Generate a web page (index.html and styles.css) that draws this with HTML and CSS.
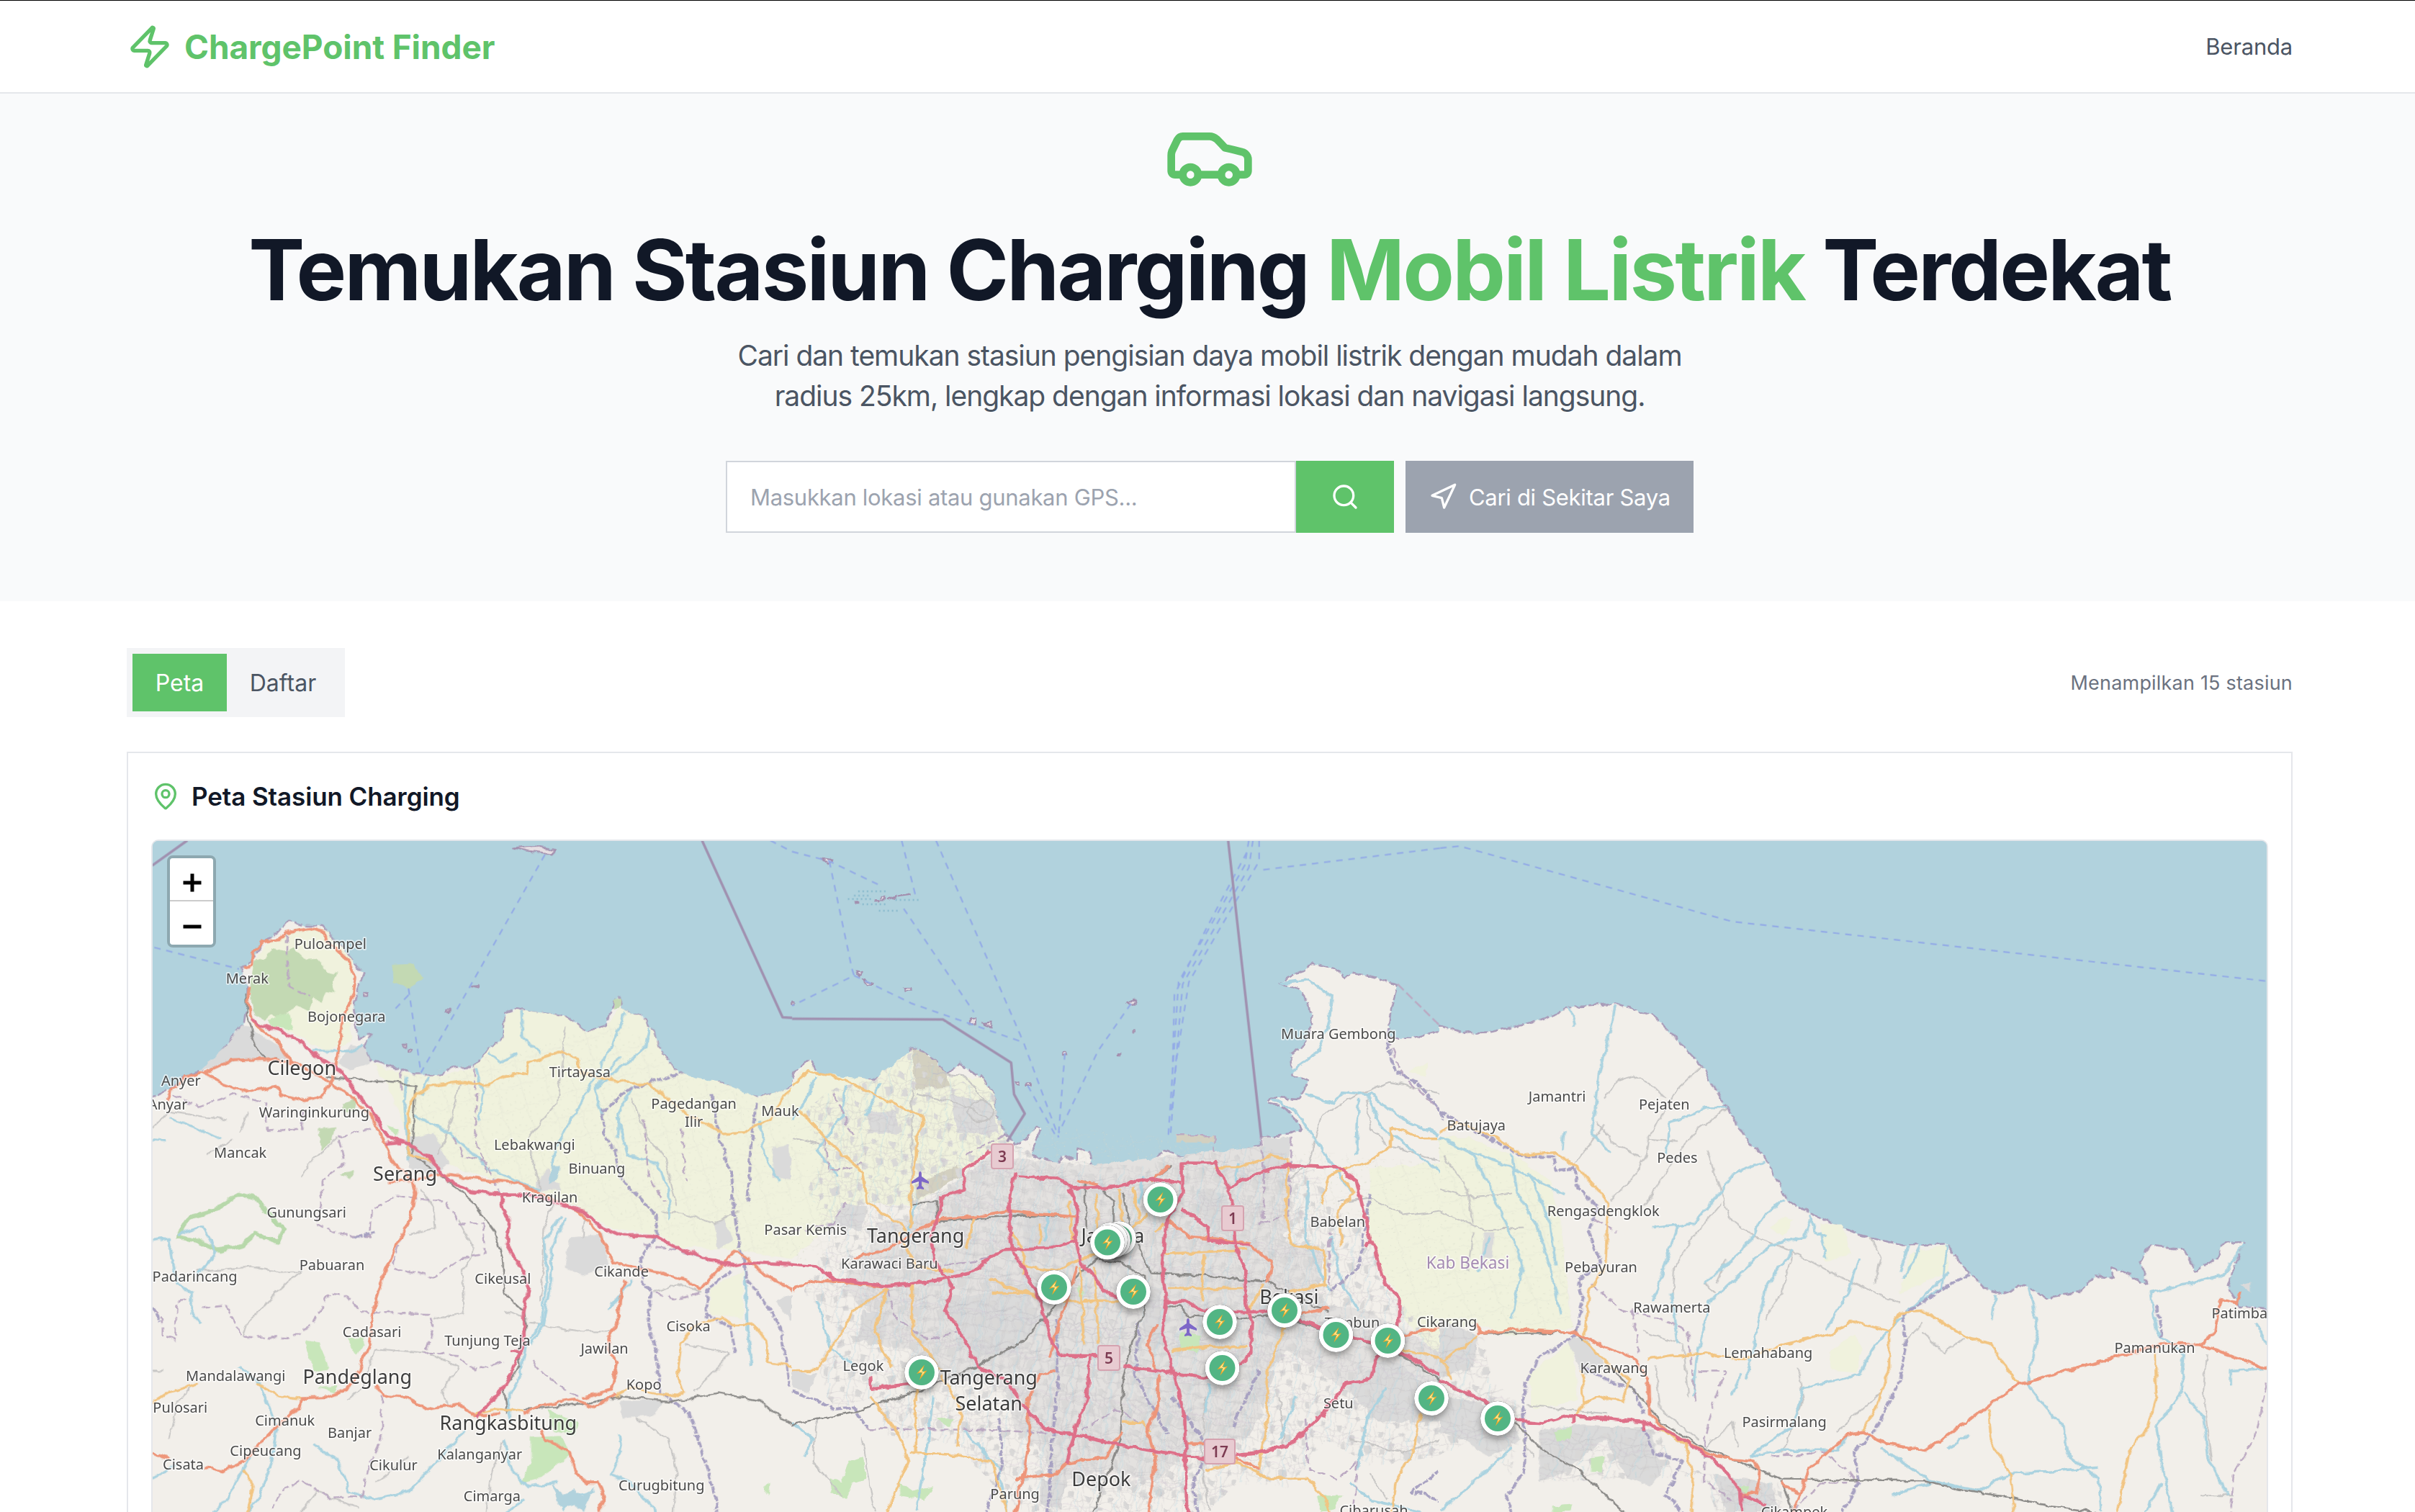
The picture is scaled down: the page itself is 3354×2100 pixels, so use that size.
FILE: index.html
```html
<!DOCTYPE html>
<html lang="id">
<head>
<meta charset="utf-8">
<title>ChargePoint Finder</title>
<link rel="stylesheet" href="styles.css">
</head>
<body>
<header class="topbar">
  <a class="brand">
    <svg class="icon brand-icon" viewBox="0 0 24 24"><path d="M4 14a1 1 0 0 1-.78-1.63l9.9-10.2a.5.5 0 0 1 .86.46l-1.92 6.02A1 1 0 0 0 13 10h7a1 1 0 0 1 .78 1.63l-9.9 10.2a.5.5 0 0 1-.86-.46l1.92-6.02A1 1 0 0 0 11 14z"/></svg>
    <span class="brand-name">ChargePoint Finder</span>
  </a>
  <nav class="nav">Beranda</nav>
</header>

<section class="hero">
  <svg class="icon hero-icon" viewBox="0 0 24 24"><path d="M19 17h2c.6 0 1-.4 1-1v-3c0-.9-.7-1.7-1.5-1.9C18.7 10.6 16 10 16 10s-1.3-1.4-2.2-2.3c-.5-.4-1.1-.7-1.8-.7H5c-.6 0-1.1.4-1.4.9l-1.4 2.9A3.7 3.7 0 0 0 2 12v4c0 .6.4 1 1 1h2"/><circle cx="7" cy="17" r="2"/><path d="M9 17h6"/><circle cx="17" cy="17" r="2"/></svg>
  <h1 class="hero-title">Temukan Stasiun Charging <span class="accent">Mobil Listrik</span> Terdekat</h1>
  <p class="hero-text">Cari dan temukan stasiun pengisian daya mobil listrik dengan mudah dalam<br>radius 25km, lengkap dengan informasi lokasi dan navigasi langsung.</p>
  <div class="search">
    <div class="search-field"><span class="search-placeholder">Masukkan lokasi atau gunakan GPS...</span></div>
    <div class="search-button"><svg class="icon icon-md" viewBox="0 0 24 24"><circle cx="11" cy="11" r="8"/><path d="m21 21-4.3-4.3"/></svg></div>
    <div class="nearby-button"><svg class="icon icon-md" viewBox="0 0 24 24"><path d="m3 11 19-9-9 19-2-8-8-2z"/></svg><span class="nearby-label">Cari di Sekitar Saya</span></div>
  </div>
</section>

<main class="main">
  <div class="toolbar">
    <div class="tabs"><span class="tab tab-active">Peta</span><span class="tab">Daftar</span></div>
    <span class="count">Menampilkan 15 stasiun</span>
  </div>
  <section class="card">
    <h2 class="card-title"><svg class="icon icon-md accent" viewBox="0 0 24 24"><path d="M20 10c0 4.993-5.539 10.193-7.399 11.799a1 1 0 0 1-1.202 0C9.539 20.193 4 14.993 4 10a8 8 0 0 1 16 0"/><circle cx="12" cy="10" r="3"/></svg><span class="card-name">Peta Stasiun Charging</span></h2>
    <div class="map">
      <svg class="layer" viewBox="99.11 546.04 1372.58 435.71" preserveAspectRatio="none">
        <defs>
          <filter id="rough" x="0" y="0" width="1" height="1" color-interpolation-filters="sRGB">
            <feTurbulence type="fractalNoise" baseFrequency="0.14" numOctaves="3" seed="4" result="n"/>
            <feDisplacementMap in="SourceGraphic" in2="n" scale="4" xChannelSelector="R" yChannelSelector="G"/>
          </filter>
          <clipPath id="centre"><rect x="-2" y="0" width="1580" height="1600"/></clipPath>
          <clipPath id="east"><rect x="-1" y="0" width="1520" height="1600"/></clipPath>
          <pattern id="streets" width="97" height="83" patternUnits="userSpaceOnUse" patternTransform="rotate(8)">
            <path d="M2 3l12 1-2 9-9 2zM40 6l15 3-4 14-8-4zM75 28l13 2-3 16-9-5zM12 48l18-3 5 14-15 7zM54 50l10-5 4 18-12 3zM80 68l12-5 3 12-11 3z" fill="#d9d8d7"/>
            <path d="M0 14l24 3 9 17 25-4 39-16M0 45l22-7 18 11 25-4 32 0M9 0l6 22-9 26 12 35M34 0l4 34-7 19 10 30M62 0l-5 27 12 23-7 33M84 0l-6 31 9 24-3 28M0 70l37-5 24 6 36-1M15 22l23-4 24 9 22-7M22 38l8 26M50 33l-3 33M70 49l27-13M47 8l15 4M78 14l-10 22" fill="none" stroke="#bcbabf" stroke-width=".6"/>
            <path d="M26 0l-7 22 9 22-4 39M72 0l3 39-9 44" fill="none" stroke="#abd3e0" stroke-width=".8"/>
            <path d="M0 30l18 5 14-4 20 14 16-9 29-6" fill="none" stroke="#c3b3cb" stroke-width=".5"/>
          </pattern>
          <pattern id="villages" width="61" height="53" patternUnits="userSpaceOnUse" patternTransform="rotate(-17)">
            <path d="M5 6h2v1H4zM17 12l2 1-2 1zM31 5h1v2h-2zM42 17l2-1v2zM53 8h1v2h-2zM10 28h2v1h-2zM26 33l2-2 1 2zM38 38h1v2h-2zM52 31h1v2h-2zM16 45h2v1h-2zM31 48h3v1h-3zM48 46l2-1v2zM23 22h2v1h-2z" fill="#d6dac9"/>
            <path d="M0 19l22 5 12-4 27 7M30 0l4 20-5 33" fill="none" stroke="#d3d6cb" stroke-width=".4"/>
          </pattern>
        </defs>
        <rect class="sea" x="90" y="540" width="1400" height="450"/>
        <g filter="url(#rough)">
          <!-- west: Banten -->
          <g transform="translate(93.5 542.3) scale(.26836 .28027)">
            <path class="land" d="M10 1580V612L60 590 95 560 140 545 175 515 205 480 240 440 250 400 250 350 235 305 262 290 290 245 325 225 350 198 385 208 430 210 470 250 505 290 532 320 515 360 505 400 512 440 520 470 552 462 532 490 545 520 600 535 650 555 720 555 740 540 800 535 830 500 868 470 872 412 905 400 940 410 1020 418 1070 455 1120 440 1135 385 1150 375 1155 405 1200 420 1235 450 1245 490 1290 550 1350 575 1400 572 1440 600 1490 608 1540 595 1575 572V1580Z"/>
            <path class="farm" d="M555 530L650 557 720 557 800 538 830 502 868 472 874 414 905 403 1020 420 1070 457 1122 442 1150 400 1200 422 1235 452 1245 492 1290 552 1400 574 1490 610 1575 580V985L1430 960 1300 955 1240 925 1130 910 1050 860 940 815 760 775 640 700 600 600Z"/>
            <path class="farm" d="M270 400L300 430 440 500 500 480 505 290 440 220 380 212 300 250 260 300ZM1370 1050L1450 1010 1450 1120 1370 1110Z"/>
            <path class="farmdots" d="M650 557L900 500 1150 430 1290 552 1490 610 1575 600V985L1430 960 1240 925 1050 860 760 775 640 700Z"/>
            <path class="wood" d="M262 405L255 350 268 290 290 285 310 265 345 272 360 262 390 290 420 288 445 315 470 320 455 340 465 365 440 362 430 385 410 380 400 408 370 395 350 405 330 425 310 415 290 432Z"/>
            <path class="wood" d="M600 300L650 298 675 330 640 355 602 340ZM420 680L462 675 455 708 430 728ZM475 785L510 775 500 795ZM480 620L515 610 510 640 480 640ZM1135 382L1152 376 1150 400 1135 402Z"/>
            <path class="grass" d="M388 1170L425 1175 448 1235 412 1242ZM490 1165L535 1165 515 1205ZM935 1395L1010 1392 1030 1435 960 1490 912 1502 935 1450ZM975 1330L1050 1360 1040 1390 990 1380ZM420 1280L470 1275 460 1292ZM1500 1510L1515 1500 1512 1530ZM300 430L350 410 360 450 310 445ZM590 670L620 680 610 700Z"/>
            <path class="town" d="M135 545L205 482 240 440 330 490 345 520 220 525ZM470 530L500 485 530 490 548 525 500 545ZM640 700L700 690 740 760 700 790 640 770ZM950 800L975 775 1010 820 950 825ZM1030 930L1110 925 1125 1000 1060 1020 1018 1000ZM1380 900L1405 890 1422 940 1390 960ZM1525 720L1560 715 1568 800 1520 790ZM1150 1310L1260 1310 1230 1345 1160 1350ZM1530 1080L1575 1060V1140Z"/>
            <path class="islet" d="M892 31L950 24 995 34 985 44 930 38ZM790 352L808 350 806 356ZM732 405h8v4h-8zM530 365h12v6h-12zM625 485h10v5h-10zM638 495h10v5h-10z"/>
            <path class="park" d="M80 930L110 885 170 870 230 830 270 840 300 880 338 912 325 942 270 925 240 950 180 962 130 940Z"/>
            <path class="minor" d="M20 680L60 640 200 660M240 1160L250 1130 320 1060 380 1010M130 1010L260 1000 330 1012 380 1010M670 820L700 860 705 910 640 925M765 575L730 700 710 740M760 890L800 960 770 1010 775 1110M930 1130L1060 1150 1130 1150M870 1100L925 1120M690 1205L760 1230 720 1290 735 1320M540 1250L560 1190 700 1200M490 1310L540 1270M60 1400L80 1320 110 1280M640 1440L560 1500M830 1568L840 1480 870 1400M1190 1350L1270 1400 1290 1480 1280 1568M990 850L970 900 960 1080M380 1568L420 1520 520 1560M700 1120L775 1110M1230 1060L1290 1040 1350 1060M1310 1180L1420 1200M470 700L400 760 380 790M20 1240L50 1240M150 740L215 705M230 690L250 640M1060 930L1070 870M1250 870L1320 880 1380 900 1440 870M1180 610L1220 700 1260 750 1290 860M1330 1290L1400 1220 1420 1200M960 825L930 700 1000 620 1020 440"/>
            <path class="river" d="M60 655L120 675 185 705M20 940L60 935 80 1040 115 1060 115 1110 140 1130M80 925L140 905 175 965 130 1020M915 405L918 470 960 505M835 505L860 525 905 505M1165 410L1130 490 1075 590 1020 680 990 740 985 800M1225 445L1215 490 1150 540 1090 590 1110 650M1150 512L1090 590M805 540L820 590 810 660M655 650L740 690 830 770 960 825M1010 880L970 940 975 1030 960 1130 925 1180 910 1250 880 1310 890 1360M1020 885L985 960 985 1030 965 1135 935 1180M230 1230L280 1270 320 1370 310 1450 280 1530 250 1568M410 1412L470 1450 495 1520 560 1540 640 1520 720 1440 775 1380M870 1400L890 1470 930 1510 1000 1500M1150 1390L1155 1430 1130 1480 1180 1500 1240 1568M1145 650L1170 740 1240 760 1270 820 1270 890M1490 660L1500 740 1535 800M1455 1010L1460 1150 1470 1230M20 1490L80 1460M255 1440L200 1540 170 1568M635 560L630 620 640 750M410 500L500 500 530 485M1180 585L1150 640 1145 700M20 705L50 708M1120 1100L1180 1030M690 560L670 600M1010 1568L1040 1530 1090 1520M880 1568L920 1540"/>
            <path class="lake" d="M985 765L1005 765 1000 800 980 805ZM985 1500L1010 1525 1040 1515 1060 1530 1090 1510 1060 1568 1040 1550 1010 1560Z"/>
            <path class="border" d="M20 1095L45 1120 45 1160 75 1170 80 1080 110 1075M140 1095L200 1090 235 1160 350 1165 400 1140 450 1060 490 1065 525 1105 690 1108 700 1140 680 1200 760 1205 800 1240 870 1220M800 540L805 600 800 700 830 780M70 600L130 630 220 600 290 620 300 685 380 680 385 640M550 680L470 700 485 760 430 800 430 860 415 900 480 925 545 930 550 870 610 835 730 850 760 900 820 900 825 970 770 980 700 1025 600 1000 620 940M575 1300L575 1400 540 1470 530 1530 450 1535 380 1495 330 1520 310 1560M940 1220L980 1260 1050 1300M750 700L770 740 830 760 860 830M345 230L345 300 350 350 400 375M620 545L625 600M1210 950L1290 960 1380 990M1210 660L1220 790 1260 850M1300 680L1310 800M1240 1060L1290 1075 1350 1060"/>
            <path class="limit" d="M1290 555L1230 570 1170 590 1110 640 1112 690 1140 730 1150 790 1200 840 1240 880 1240 930 1200 980 1205 1030 1225 1060 1220 1130 1240 1200 1250 1290 1320 1340 1340 1400 1370 1490 1390 1568M1375 600L1390 700 1420 780 1425 860 1440 940 1460 1030 1500 1080 1540 1140 1560 1280M1480 620L1470 720 1460 850M1360 1120L1365 1050 1420 1010M1360 1110L1420 1140 1430 1200M20 1095L40 1130M510 930L560 920"/>
            <path class="rail" d="M245 370L250 420 270 490 295 518M155 545L210 522 320 518M440 560L658 578 648 740 720 790 800 855 850 920 868 985 872 1060 920 1105 925 1140 905 1190 910 1230 870 1280 880 1340M920 1330L1060 1318 1155 1300 1275 1312 1390 1292 1490 1310 1540 1350 1568 1362"/>
            <path class="primary" d="M658 600L690 582 770 572 830 580 870 560 925 550 930 525 1005 502 1048 515 1052 550 1130 565 1180 575 1220 575 1260 605 1320 650 1400 692 1450 690 1520 655 1550 600 1570 585M658 600L640 640 640 740 700 755M20 1315L60 1290 130 1270M270 1268L330 1300 380 1305M240 1470L265 1510 250 1568M1140 1300L1180 1280 1220 1290 1290 1300 1305 1290 1290 1250 1300 1180 1330 1135 1400 1118 1425 1135 1475 1135 1505 1170 1510 1220 1568 1230M800 1340L850 1330 920 1335"/>
            <path class="trunk" d="M240 305L262 300 265 270 290 245 330 240 345 225 400 215 435 225 450 250 495 290 510 330 505 370 480 430 470 500 460 560 430 605 390 615 330 600 320 580 250 595 190 575 145 550 100 560 65 590 55 612M255 350L250 390 270 440 320 475 350 520 420 555 500 605 550 650 575 700 605 760 650 800 658 830 645 890 610 950 580 1020 555 1100 545 1180 520 1240 490 1285 440 1303 380 1305 375 1325 320 1370 240 1450 190 1472 145 1465M145 550L210 522 310 518 360 530M590 802L650 800 720 785 800 795 900 805 960 830 1050 870 1100 920 1135 990 1180 1000 1250 1015 1310 1030 1345 1052 1380 1015 1430 960 1470 990 1520 1030 1568 1052M1165 1030L1150 1075 1145 1130 1125 1165 1120 1190 1145 1220 1130 1285 1060 1305M560 1275L580 1298 630 1300 685 1330 760 1318 800 1345 860 1340M920 1340L960 1320 1040 1308 1090 1325 1140 1295M960 1375L970 1400 1030 1430 1045 1480 1070 1500 1100 1500 1115 1540 1100 1568M20 1432L60 1445"/>
            <path class="motorway" d="M262 425L280 440 325 452 370 475 430 520 475 545 510 595 550 635 590 700 640 715 690 745 735 800 790 825 870 832 930 832 990 850 1060 870 1120 915 1160 927 1230 928 1300 960 1370 985 1430 997 1470 990 1570 994M868 832L866 860 882 895 878 950 915 1010 930 1050 918 1110 920 1180 900 1220 875 1275 840 1310 805 1350M885 1193L910 1195M585 716L620 712"/>
          </g>
          <!-- centre: Jakarta -->
          <g transform="translate(514.25 542.3) scale(.26836 .28027)"><g clip-path="url(#centre)">
            <path class="land" d="M-8 1580V580L10 545 40 522 65 550 120 570 200 565 260 535 290 490 330 510 375 555 405 530 455 560 490 600 490 650 520 690 540 718 570 700 590 675 602 680 580 740 640 762 655 740 690 755 690 725 718 730 730 780 790 790 840 785 880 755 900 730 930 740 1020 750 1060 735 1130 720 1140 700 1210 690 1235 680 1215 655 1190 630 1150 620 1160 608 1225 612 1250 570 1210 555 1205 510 1235 490 1260 440 1250 390 1225 355 1180 342 1230 315 1260 298 1310 310 1340 330 1360 318 1465 345 1450 400 1440 470 1500 470 1576 450V1580Z"/>
            <path class="farm" d="M-8 583L40 525 65 552 200 567 290 495 375 558 455 562 490 600 490 650 530 715 480 735 290 860 170 850 -8 985ZM1400 770L1576 760V1230L1480 1120 1470 1060 1435 1030 1390 900ZM1490 545L1540 525 1530 560Z"/>
            <path class="farmdots" d="M-8 620L1576 760V1230L1480 1120 1390 900 -8 985Z"/>
            <path class="sand" d="M290 490L330 512 375 555 385 580 300 590ZM300 810L400 765 410 790 300 845ZM928 696L1022 696V712H928Z"/>
            <path class="city" d="M300 880L480 740 700 765 900 745 1140 720 1200 760 1210 860 1190 940 1290 960 1270 1060 1300 1090 1390 1100 1480 1150 1576 1200V1360L1440 1340 1330 1280 1200 1190 1120 1270 1140 1340 1100 1400 960 1420 880 1500 760 1470 640 1500 600 1420 540 1380 520 1290 480 1270 330 1260 300 1200 220 1180 200 1110 130 1060 130 1000 190 960 200 900Z"/>
            <path class="town" d="M180 640L250 640 260 690 190 690ZM380 600L480 620 500 690 400 690ZM370 1080L560 1040 600 1120 540 1200 430 1210ZM560 880L660 880 670 950 560 960ZM1140 700L1210 700 1200 760 1140 770ZM1130 1080L1200 1100 1190 1170 1120 1150ZM850 1040L890 1050 890 1200 850 1150ZM980 820L1050 830 1055 930 1000 900ZM1340 1280L1440 1210 1568 1290 1568 1360 1420 1360ZM600 1490L660 1500 650 1560 600 1550ZM1100 1240L1170 1240 1140 1330ZM0 1240L60 1250 40 1290 0 1280ZM170 1100L230 1110 220 1180 160 1170ZM120 850L180 860 170 920 100 900Z"/>
            <path class="streets" d="M30 640L90 590 200 567 290 495 375 558 490 600 530 715 640 765 730 785 840 787 900 745 1140 720 1260 760 1300 860 1390 900 1420 1010 1470 1080 1568 1180V1440L1400 1460 1290 1400 1200 1510 1080 1500 1000 1568H560L480 1500 400 1410 230 1390 200 1300 100 1330 60 1230 110 1150 30 1060 90 940 40 820 80 740Z"/>
            <path class="streets streets-turned" d="M290 860L480 740 900 760 1200 760 1290 960 1300 1180 1150 1250 1110 1420 860 1560 620 1500 480 1260 330 1260 150 1080Z"/>
            <path class="grass" d="M90 1490L120 1500 140 1450 170 1440 180 1490 150 1500 130 1540 95 1520ZM350 1350L390 1350 380 1370ZM260 1500L290 1520 340 1510 320 1540 260 1530ZM940 1150L990 1160 980 1200 940 1190ZM690 1040L710 1060 700 1080ZM1270 1530L1330 1530 1310 1560 1280 1568Z"/>
            <path class="islet" d="M70 52L98 58 90 66ZM200 150h10v4h-10zM215 143h8v8h-8zM230 150l20-8v4zM255 144l30-7v3zM155 154h4v3h-4zM155 316L172 318 165 328ZM172 335L195 342 182 346ZM272 352h16v6h-16zM430 425h14v14h-14zM462 435l22-2-2 10zM812 385l18-2-4 12zM655 500h10v8h-10zM570 576h8v6h-8zM825 453h7v5h-7zM787 507h6v4h-6zM540 572h8v6h-8zM0 385h6v8h-6z"/>
            <path class="lake" d="M1466 352L1568 442 1500 470 1442 468Z"/>
            <path class="minor" d="M300 600L400 620 480 660M290 590V850M340 550L420 560 470 620M425 640A30 24 0 1 0 485 640A30 24 0 1 0 425 640M0 700L80 720M1370 600L1280 650 1250 760 1200 800M1370 600L1450 570 1568 600M1390 610L1400 680 1440 720M1450 720L1568 755M1000 1300L990 1450 1010 1568M1180 1300L1190 1420M1350 1400L1480 1430 1568 1400M1400 1480L1440 1540M60 1350L50 1450 120 1530M170 1400L200 1568M1320 850L1400 840 1480 880 1568 870"/>
            <path class="river" d="M1180 342L1250 335 1305 375 1300 430 1275 500 1205 550M1240 600L1310 620 1330 595 1400 600 1480 660 1568 695M1160 610L1220 640 1290 740 1340 810 1360 830M1370 610L1365 740M1390 600L1430 680 1568 780M60 560L30 620 0 660M130 580L120 650 60 730 110 790M210 575L180 650M300 850L280 930M340 1300L330 1400 300 1568M620 870L610 940M850 790L840 850M1010 1270L1000 1340M1080 760L1070 810M1440 1280L1390 1350 1370 1470M1520 1568L1400 1540 1350 1500M1220 1300L1180 1400M420 1380L500 1470 520 1568M60 1080L90 1180 150 1230M1300 930L1330 1040 1370 1100M1250 800L1240 930 1300 1060M0 1360L50 1400 30 1440"/>
            <path class="border" d="M930 696H1020V735M1440 470L1480 560 1568 640M1210 700L1200 880 1130 900M420 740L520 690M180 1375L480 1378 620 1385M340 1000L480 980M1240 1350L1250 1470 1320 1490 1370 1450 1360 1568M1300 1040L1300 920M1135 700L1142 800 1140 900M230 1050L250 1120 330 1170 400 1150M0 920L100 900 130 850M700 1380L780 1330 860 1370M80 700L90 780 180 760M100 600L150 700"/>
            <path class="limit" d="M0 1290L60 1310 100 1330 150 1325 180 1375M640 1120L645 1250 630 1400 620 1568M840 1130L830 1250 910 1390M920 1300L1010 1420 970 1500 980 1568M1130 1240L1100 1300 1065 1370M500 1350L510 1450 470 1568M1440 480L1460 550 1510 570 1568 640M1568 1470L1500 1520 1568 1540M1400 830L1370 1000 1300 1060"/>
            <path class="rail" d="M0 1365L150 1335 300 1290 450 1230 560 1170 620 1110 680 1030 740 980M355 895L480 885 560 880 690 885M350 900L350 850 290 855M710 800L712 910M750 820L780 850 780 950M800 830L820 920 870 1015 1000 1020 1150 1035 1200 1060 1300 1105M740 985L800 990 850 1020 855 1100 820 1180 800 1260 795 1400 730 1568M905 1090L940 1090 960 1115 1090 1120 1160 1110 1300 1150 1440 1185 1570 1262M915 765L870 800"/>
            <path class="primary" d="M0 580L40 545 120 565 200 600 320 655 300 700 300 740 285 850 290 910M20 640L100 720 170 780 180 850 260 900 280 920M1020 770L1080 770 1160 742 1200 750 1195 880 1210 950 1290 960 1290 1040 1200 1060M1280 850L1300 790 1340 770 1390 760 1450 720 1450 675 1520 700 1568 700M1330 790L1360 830 1320 870 1330 950M735 830L740 920M790 820L800 900M825 815L840 890M700 1000L705 1180M730 1000L742 1180M660 1080L840 1080M900 970L1100 960M910 1050L1090 1050M290 1040L290 1150 330 1200 360 1240M230 1050L200 1150 240 1230M300 1430L300 1280M285 1430L390 1435 480 1450 520 1568M0 1240L60 1240 100 1180 150 1100 230 1050M230 1568L280 1450 260 1390 190 1300M360 1250L410 1330 400 1420M1130 1470L1150 1350 1150 1240 1200 1120M1070 1450L1150 1490 1250 1490 1290 1540 1300 1568M1520 1340L1500 1430 1460 1500 1450 1568M800 1360L850 1360 870 1380M920 1195L1000 1185 1100 1185M480 1030L620 1080 660 1080M560 1000L640 1010 700 980 800 960M600 900L600 950M1000 970L990 1080M530 920L560 960 560 1020M670 850L680 940M440 880L420 960M260 920L300 1000 390 1010M1100 1110L1140 1040M1470 1190L1510 1200 1568 1210M860 880L800 930M880 920L900 900M640 1080L560 1060 480 1060M1000 1470L1080 1450"/>
            <path class="trunk" d="M0 1052L60 1030 220 1045M350 890L430 885 520 870 570 875 690 885M150 980L230 960 300 920 350 890M1110 950L1160 990 1150 1040M1230 1110L1300 1095M570 1310L575 1400 560 1480 540 1568M540 1490L640 1480 660 1455 760 1440 800 1380M885 1250L885 1320 860 1380 880 1440 860 1568M1070 1440L1130 1470M910 765L870 800M880 1130L860 1180 880 1240M690 800L740 810M905 890L960 930 1110 945M640 1240L600 1250 570 1310M1470 1160L1568 1140M620 1210L690 1000M950 1410L1010 1410"/>
            <path class="motorway" d="M-2 995L60 1000 100 1028 230 1045 330 1035 430 1015 510 960 640 955 690 940M480 732L415 775 415 820 360 840 355 880 335 930 345 985 390 1050 370 1100 405 1145 450 1230 520 1265 560 1320 610 1375 680 1388 800 1415 1000 1445M540 780L525 850 530 950 600 1080 630 1180 655 1205 740 1207M800 1228L870 1240 920 1245 1000 1258 1080 1230 1110 1200 1112 1130 1095 1060 1100 1010 1075 960 1070 900 1058 820 1020 758 945 758 945 830 905 900 895 1000 905 1080 895 1150 925 1250 950 1350 955 1568M545 790L640 795 680 818 780 815 870 795 940 808M670 818L692 870 685 930 700 990 760 1060 830 1090M905 1080L950 1080 990 1100 1100 1105 1190 1100 1230 1125 1320 1155 1440 1180 1570 1252M1058 820L1080 800 1190 765 1320 770 1365 800 1390 900 1435 1040 1470 1070 1465 1170 1415 1210 1400 1260 1340 1270 1280 1345 1200 1415 1130 1430 1070 1435M940 865L1005 905 1010 940 1110 950M190 1255L192 1282 310 1268M720 1210L715 1300 685 1380 665 1455M1385 955L1400 940M1265 1350L1290 1345"/>
          </g></g>
          <!-- east: Karawang and Subang -->
          <g transform="translate(935 542.3) scale(.35778 .28027)"><g clip-path="url(#east)">
            <path class="land" d="M-4 1580V440L45 460 95 455 170 432 245 396 315 390 390 420 475 535 520 630 560 712 590 745 630 845 670 875 760 925 840 950 920 948 960 1015 990 1052 1020 1062 1060 1042 1100 1072 1160 1058 1190 1020 1222 1025 1220 1000 1285 1040 1268 985 1290 952 1350 960 1370 1010 1410 980 1422 945 1460 942 1440 1000 1430 1050 1450 1090 1510 1100V1580Z"/>
            <path class="farm" d="M-4 700L50 700 130 740 200 800 220 900 230 1050 240 1140 120 1160 60 1130 -4 1160ZM600 910L625 880 640 890 625 930ZM690 900L730 900 745 970 700 985ZM835 1060L850 970 920 950 925 1010ZM705 1200L750 1155 768 1190 755 1245 710 1240ZM160 1250L240 1170 250 1310 170 1330Z"/>
            <path class="farmdots" d="M-4 700L130 740 220 900 240 1140 -4 1140Z"/>
            <path class="town" d="M-4 1120L40 1140 70 1160 60 1230 -4 1260ZM-4 1300L60 1310 130 1350 145 1400 90 1440 40 1400 -4 1380ZM180 1380L260 1365 380 1375 405 1470 380 1510 340 1490 300 1400 220 1480 180 1500ZM495 1480L600 1500 615 1568 520 1568ZM230 1170L262 1160 300 1230 260 1250ZM80 920L100 920 95 980 75 980ZM1452 1040L1472 1035 1472 1060Z"/>
            <path class="streets" d="M-4 1120L80 1160 90 1260 150 1330 130 1480 60 1400 -4 1440ZM180 1370L400 1370 420 1470 620 1500 620 1568 500 1568 480 1480 360 1490 180 1500Z"/>
            <path class="grass" d="M210 1380L240 1370 235 1400 212 1405ZM275 1445L298 1440 292 1475 275 1475ZM205 1555L240 1550 235 1568 205 1568ZM540 1510L560 1510 555 1530Z"/>
            <path class="minor" d="M475 535L430 590 400 650 380 700 375 740 345 800 310 845M520 635L470 680 435 730 370 860M298 610L320 570 350 558 380 575 410 610M285 660L310 710 365 745M245 760L298 670M485 730L510 830 525 885 570 930 640 965 720 1020 835 1085M510 855L460 930 425 1000 420 1100M640 965L620 1060 590 1120M780 930L800 980 790 1040M875 1150L915 1200 950 1165M840 1180L875 1130M620 1430L640 1370 660 1300 650 1230M1390 1200L1385 1300 1400 1450M1380 1530L1440 1530M0 820L60 840 130 830M0 870L80 915 150 910M60 920L50 1010M5 740L50 820 60 900M480 1040L500 1060M160 1320L300 1340M150 1400L170 1440M520 980L500 1040M800 1290L720 1380M480 1420L530 1360 540 1420M380 705L430 710M370 1150L440 1180 450 1300M390 1230L400 1330 470 1400"/>
            <path class="river" d="M235 400L245 440M318 395L305 470 290 550 275 690 310 735M520 630L480 630 460 650 415 665 412 740M590 755L530 785 500 840 460 900 385 910M430 905L410 990 385 1080M625 845L590 880 550 960 480 1040M670 890L660 930 600 950 490 1080 465 1220 460 1300M640 960L590 1050 570 1170 555 1260M690 920L700 980M760 980L740 1060 700 1145M920 950L910 1050 850 1100 790 1180 760 1250 660 1280 640 1370 560 1440M925 1010L860 1090M1008 1065L1002 1120M1068 1045L1085 1150 1065 1270 1090 1310 1130 1370 1140 1440 1195 1490 1200 1568M1460 945L1420 1020 1290 1060 1300 1150 1350 1200 1345 1290 1300 1370 1310 1460 1330 1568M1435 1275L1435 1240 1500 1235M1350 1290L1385 1350 1395 1450 1430 1530M800 1420L890 1495 980 1520 1030 1480 1195 1465M0 700L60 740 110 870 150 990 130 1120M50 730L130 770 225 830M130 740L140 830 175 900 200 1000 220 1110M160 780L200 900 210 1000M850 950L835 1010M875 945L840 1030M560 1440L620 1425 720 1425 740 1390M225 685L222 730M1480 1130L1500 1180M545 1250L530 1300M420 1060L430 1180M90 930L70 1010M820 1530L890 1500M960 1390L920 1420M670 880L680 920 700 930M0 1568L60 1500 130 1420M1310 1500L1280 1568"/>
            <path class="border" d="M1500 1270L1480 1390 1440 1480 1435 1568M275 1040L330 1100 400 1120 450 1150 455 1220 465 1310M470 1240L520 1240 500 1300 480 1400 480 1500 530 1540M350 1100L360 1200M600 1440L700 1430 760 1500M280 890L320 920M640 1568L690 1500 740 1500"/>
            <path class="limit" d="M0 640L40 670 100 710 150 745 205 745 210 775 245 770 250 820 285 860 270 920 290 990 250 1030 260 1070 245 1160 180 1210 155 1270 150 1330 155 1420 150 1480 120 1530 130 1568M960 1018L920 1045 880 1080 840 1110 845 1190 835 1260 790 1380 750 1430 760 1500 730 1568M365 1370L390 1430 440 1450 410 1530 440 1568M260 1230L310 1270 350 1280 370 1340M0 640L5 660M1300 1090L1310 1160"/>
            <path class="rail" d="M75 1155L245 1152 300 1220 370 1310 400 1360 480 1420 560 1460 620 1492 880 1495 950 1518 1040 1535 1110 1555 1190 1568M135 1360L180 1420 250 1470 335 1568M620 1495L640 1568M-2 1264L105 1328"/>
            <path class="primary" d="M0 690L30 665 100 700 150 742 205 735 250 770 305 850 300 1000 270 1060 262 1160M375 1215L420 1205 480 1200 550 1215 630 1178 710 1155 745 1125 815 1150 835 1105 880 1103 950 1160 1000 1178 1020 1220 1050 1270M815 1150L815 1240 790 1330 765 1382M995 1330L1000 1400 1035 1480 1042 1568M1298 1200L1300 1300 1285 1370 1250 1430 1240 1500 1228 1568M400 1380L445 1410 460 1500 455 1568M0 1220L70 1160M0 1210L20 1260M260 1170L300 1220 345 1260 330 1310 290 1300 260 1320M258 1240L260 1320 245 1350"/>
            <path class="trunk" d="M70 1155L140 1145 240 1152 350 1210 378 1260 380 1340 410 1380 500 1440 570 1450 580 1470 575 1525 545 1530M620 1500L650 1525M640 1568L670 1470 740 1388 765 1382 810 1410 880 1425 990 1328 1050 1272 1240 1205 1310 1178 1380 1180 1510 1240M1383 1180L1405 1150 1415 1075 1445 1085 1452 1058M65 1130L75 1155"/>
            <path class="motorway" d="M-2 1262L105 1325 140 1355 185 1362 230 1345 370 1358 440 1400 510 1460 545 1520 548 1568M550 1530L590 1550M243 1345L243 1365M370 1355L368 1380"/>
          </g></g>
        </g>
        <g transform="translate(93.5 542.3) scale(.26836 .28027)">
          <path class="ferry" d="M970 45L670 550M25 260L230 310M640 355L670 550M640 370L600 410M1515 12L1568 38"/>
          <path class="seaborder" d="M20 70L105 12M1350 12L1545 422 1568 423"/>
        </g>
        <g transform="translate(514.25 542.3) scale(.26836 .28027)">
          <path class="ferry" d="M0 38L90 60 210 115M90 60L145 310 150 325 0 395M150 325L290 390 560 480 645 700M265 12L300 145M270 170L440 410M348 12L560 480M820 390L740 500 645 690M660 505L645 690M570 580L640 700M1105 12L1095 70 935 340 910 700M1115 12L1105 75 945 345 918 640M1130 12L1130 60 960 340 930 520 915 700M1100 40L1000 220 925 370 920 560M1140 80L1568 30"/>
          <path class="shoals" d="M135 148h60M160 130h70M170 160h60M210 175h50M150 140h40M250 150h60"/>
          <path class="seaborder" d="M1055 12L1135 700M0 425L365 427 530 527 537 600 563 645 520 710"/>
          <path class="border" d="M1465 345L1568 442"/>
        </g>
        <g transform="translate(935 542.3) scale(.35778 .28027)"><path class="ferry" d="M0 30L35 25 530 200 1500 338"/></g>

        <g class="labels" transform="translate(0 -.4)">
          <text x="214.5" y="613">Puloampel</text><text x="160.5" y="635.5">Merak</text><text x="225" y="660.5">Bojonegara</text>
          <text x="117.5" y="702">Anyer</text><text x="109" y="717.5">Anyar</text><text x="204" y="722.5">Waringinkurung</text>
          <text x="156" y="748.5">Mancak</text><text x="199" y="787.5">Gunungsari</text><text x="215.5" y="821.5">Pabuaran</text>
          <text x="126.5" y="829">Padarincang</text><text x="241.5" y="865">Cadasari</text><text x="153" y="893.5">Mandalawangi</text>
          <text x="117" y="914">Pulosari</text><text x="185" y="922.5">Cimanuk</text><text x="227" y="930.5">Banjar</text>
          <text x="172.5" y="942">Cipeucang</text><text x="119" y="951">Cisata</text><text x="255.5" y="951.5">Cikulur</text>
          <text x="311.5" y="944.5">Kalanganyar</text><text x="319.5" y="971.5">Cimarga</text><text x="326.5" y="830.5">Cikeusal</text>
          <text x="316.5" y="870.5">Tunjung Teja</text><text x="376.5" y="696.5">Tirtayasa</text><text x="347" y="743.5">Lebakwangi</text>
          <text x="387.5" y="759">Binuang</text><text x="357" y="777.5">Kragilan</text><text x="403.5" y="826">Cikande</text>
          <text x="392.5" y="876">Jawilan</text><text x="447" y="861.5">Cisoka</text><text x="418" y="899">Kopo</text>
          <text x="429.5" y="964.5">Curugbitung</text><text x="450.5" y="717">Pagedangan</text><text x="450.5" y="728.5">Ilir</text>
          <text x="506.5" y="721.5">Mauk</text><text x="523" y="798.5">Pasar Kemis</text><text x="577.5" y="820.5">Karawaci Baru</text>
          <text x="560.5" y="887">Legok</text><text x="659" y="970">Parung</text><text x="869" y="671.5">Muara Gembong</text>
          <text x="868.5" y="793.5">Babelan</text><text x="878" y="859">Tambun</text><text x="869" y="911.5">Setu</text>
          <text x="892" y="981">Cibarusah</text><text x="939.5" y="858.5">Cikarang</text><text x="958.5" y="731">Batujaya</text>
          <text x="1011" y="712">Jamantri</text><text x="1080.5" y="717.5">Pejaten</text><text x="1089" y="752">Pedes</text>
          <text x="1041" y="786.5">Rengasdengklok</text><text x="1039.5" y="823">Pebayuran</text><text x="1085.5" y="849">Rawamerta</text>
          <text x="1148" y="878.5">Lemahabang</text><text x="1048" y="888.5">Karawang</text><text x="1158.5" y="923.5">Pasirmalang</text>
          <text x="1165" y="982">Cikampek</text><text x="1399" y="875.5">Pamanukan</text><text x="1457" y="853">Patimban</text>
          <text class="region" x="953" y="820">Kab Bekasi</text>
          <text class="big" x="196" y="693.5">Cilegon</text><text class="big" x="263" y="762">Serang</text>
          <text class="big" x="232" y="894">Pandeglang</text><text class="big" x="330" y="924">Rangkasbitung</text>
          <text class="big" x="594.5" y="802.5">Tangerang</text><text class="big" x="642" y="894.5">Tangerang</text><text class="big" x="642" y="911.5">Selatan</text>
          <text class="big" x="722.5" y="802.5">Jakarta</text><text class="big" x="837" y="842">Bekasi</text><text class="big" x="715" y="960.5">Depok</text>
        </g>
      </svg>
      <svg class="layer" viewBox="212 1168 2936 932">
        <defs>
          <g id="pin"><circle class="pin-shadow" r="24"/><circle r="24" fill="#fff"/><circle r="18" fill="#52b584"/><path d="M4-10.500L-7 2 .5 0-3 10.500 7.500-2.500.5-.5Z" fill="#f9a825"/><path d="M2.500-7.500L-4 0 2-1.500-.5 5.500 4.500-1-1 .2Z" fill="#fff3a0"/></g>
          <g id="plane"><path d="M0-12c2 0 2 3 2 7l10 7v3l-10-3v6l3 3v2l-5-1-5 1v-2l3-3V2l-10 3V2l10-7c0-4 0-7 2-7z" fill="#7d68c8"/></g>
        </defs>
        <g class="shield">
          <rect x="1377" y="1589" width="30" height="34" rx="3"/><text x="1392" y="1614">3</text>
          <rect x="1697" y="1675" width="30" height="34" rx="3"/><text x="1712" y="1700">1</text>
          <rect x="1525" y="1869" width="30" height="34" rx="3"/><text x="1540" y="1894">5</text>
          <rect x="1673" y="1999" width="42" height="34" rx="3"/><text x="1694" y="2024">17</text>
        </g>
        <use href="#plane" x="1278" y="1639"/><use href="#plane" x="1650" y="1843"/>
        <use href="#pin" x="1611.500" y="1666"/><use href="#pin" x="1554" y="1720"/><use href="#pin" x="1546" y="1723"/><use href="#pin" x="1542" y="1722"/><use href="#pin" x="1538" y="1725.500"/>
        <use href="#pin" x="1464" y="1788"/><use href="#pin" x="1574" y="1794"/><use href="#pin" x="1694" y="1836"/><use href="#pin" x="1784" y="1820"/>
        <use href="#pin" x="1855.500" y="1854"/><use href="#pin" x="1927.500" y="1862"/><use href="#pin" x="1697.500" y="1900"/><use href="#pin" x="1280" y="1906"/>
        <use href="#pin" x="1988" y="1942"/><use href="#pin" x="2080" y="1970"/>
      </svg>
      <div class="zoom">
        <div class="zoom-button"><svg class="zoom-sign" viewBox="0 0 26 26"><path d="M.5 13h25M13 .5v25"/></svg></div>
        <div class="zoom-button"><svg class="zoom-sign" viewBox="0 0 26 26"><path d="M.5 13h25"/></svg></div>
      </div>
    </div>
  </section>
</main>
</body>
</html>
```
FILE: styles.css
```css
* { box-sizing: border-box; margin: 0; padding: 0; }
html { height: 2100px; overflow: hidden; }
body {
  width: 3354px; height: 2100px; overflow: hidden;
  background: #fff; color: #111827;
  font-family: Inter, "Liberation Sans", sans-serif;
  font-size: 31px;
}
.icon { display: block; flex: none; fill: none; stroke: currentColor; stroke-width: 2; stroke-linecap: round; stroke-linejoin: round; }
.icon-md { width: 40px; height: 40px; }
.accent { color: #5fc36a; }

.topbar {
  display: flex; align-items: center; justify-content: space-between;
  height: 130px; padding: 0 170px 0 176px;
  border-top: 1px solid #000; border-bottom: 2px solid #e5e7eb;
}
.brand { display: flex; align-items: center; gap: 16px; color: #5fc36a; }
.brand-icon { width: 64px; height: 64px; }
.brand-name { font-size: 46px; font-weight: 700; letter-spacing: -0.1px; white-space: nowrap; }
.nav { color: #4b5563; letter-spacing: -0.2px; }

.hero {
  display: flex; flex-direction: column; align-items: center;
  height: 705px; padding: 22px 0 0 6px; background: #f9fafb;
}
.hero-icon { width: 128px; height: 128px; color: #5fc36a; }
.hero-title { margin-top: 35px; font-size: 117px; line-height: 120px; font-weight: 700; letter-spacing: -2.75px; white-space: nowrap; }
.hero-text { margin-top: 31px; font-size: 39px; line-height: 56px; text-align: center; letter-spacing: -1.03px; color: #4b5563; white-space: nowrap; }
.search { display: flex; width: 1344px; height: 100px; margin-top: 62px; }
.search-field { display: flex; align-items: center; width: 792px; padding: 0 32px; border: 2px solid #d1d5db; background: #fff; color: #9ca3af; letter-spacing: -0.3px; }
.search-button { display: flex; align-items: center; justify-content: center; width: 136px; background: #5fc36a; color: #fff; }
.nearby-button { display: flex; align-items: center; gap: 16px; width: 400px; margin-left: 16px; padding: 0 32px; background: #9ca3af; color: #fff; letter-spacing: -0.3px; white-space: nowrap; }

.main { padding: 65px 170px 0 176px; }
.toolbar { display: flex; align-items: center; justify-content: space-between; height: 96px; }
.tabs { display: flex; width: 303px; height: 96px; padding: 8px; background: #f3f4f6; color: #4b5563; font-size: 32px; }
.tab { display: flex; align-items: center; justify-content: center; flex: 1 1 156px; }
.tab-active { flex: 0 0 131px; background: #5fc36a; color: #fff; }
.count { font-size: 27px; letter-spacing: 0.2px; color: #6b7280; }
.card { height: 1056px; margin-top: 48px; padding: 32px 32px 0; border: 2px solid #e5e7eb; border-bottom: 0; }
.card-title { display: flex; align-items: center; gap: 16px; height: 56px; font-size: 35px; font-weight: 600; letter-spacing: -0.1px; white-space: nowrap; }

.map { position: relative; height: 934px; margin-top: 32px; border: 2px solid #e5e7eb; border-bottom: 0; border-radius: 10px 10px 0 0; overflow: hidden; background: #b1d2dd; }
.layer { position: absolute; left: 0; top: 0; width: 2936px; height: 932px; }
.zoom { position: absolute; left: 20px; top: 20px; width: 68px; border: 4px solid rgba(0, 0, 0, .2); border-radius: 8px; background-clip: padding-box; }
.zoom-button { display: flex; align-items: center; justify-content: center; height: 60px; padding: 9px 0 0 1px; background: #fff; }
.zoom-button:first-child { border-bottom: 2px solid #ccc; border-radius: 4px 4px 0 0; }
.zoom-button:last-child { border-radius: 0 0 4px 4px; }
.zoom-sign { width: 26px; height: 26px; stroke: #000; stroke-width: 5; }

.layer path { vector-effect: non-scaling-stroke; stroke-linejoin: round; }
.layer pattern path { vector-effect: none; }
.sea, .lake { fill: #b1d2dd; }
.land { fill: #f2efea; stroke: #a99bb8; stroke-width: 2.5; stroke-dasharray: 14 4; }
.farm { fill: #f0f2dd; }
.farmdots { fill: url(#villages); }
.wood { fill: #c3d9b3; }
.grass { fill: #c8e6ba; }
.town { fill: #dadada; }
.city { fill: #e3e1df; }
.sand { fill: #d3d0c0; }
.streets { fill: url(#streets); }
.streets-turned { opacity: .8; transform-box: fill-box; transform-origin: center; transform: scale(.98, .98) rotate(0.5deg); }
.islet { fill: #e6dfe3; stroke: #a38fae; stroke-width: 2; }
.park { fill: none; stroke: #b7d8aa; stroke-width: 6; }
.minor, .river, .border, .limit, .rail, .primary, .trunk, .motorway, .ferry, .seaborder, .shoals { fill: none; }
.minor { stroke: #c6c5c4; stroke-width: 2; }
.river { stroke: #abd3e0; stroke-width: 3.5; }
.border { stroke: #bba9c2; stroke-width: 2.5; stroke-dasharray: 12 5; }
.limit { stroke: #a8a2c2; stroke-width: 4; stroke-dasharray: 9 2; }
.rail { stroke: #8b8a88; stroke-width: 2.5; }
.primary { stroke: #f2c582; stroke-width: 3.5; }
.trunk { stroke: #ee967a; stroke-width: 4; }
.motorway { stroke: #de7089; stroke-width: 4.6; }
.ferry { stroke: #93abe6; stroke-width: 2.2; stroke-dasharray: 9 8; }
.shoals { stroke: #7fb4c9; stroke-width: 2; stroke-dasharray: 2 4; }
.seaborder { stroke: #a091b0; stroke-width: 3.5; }

.labels text {
  font: 9.35px "Noto Sans", sans-serif; fill: #4a4a4a; text-anchor: middle; dominant-baseline: central;
  paint-order: stroke; stroke: rgba(255, 255, 255, .65); stroke-width: 1.6px; stroke-linejoin: round;
}
.labels .big { font-size: 12.6px; fill: #3c3c3c; }
.labels .region { font-size: 10.6px; fill: #a58bb3; }
.shield rect { fill: #e8cbd1; stroke: #d5a3b0; stroke-width: 2; }
.shield text { font: 600 21px "Noto Sans", sans-serif; fill: #7d3b52; text-anchor: middle; }
.pin-shadow { filter: drop-shadow(0 5px 5px rgba(0, 0, 0, .35)); }
```
